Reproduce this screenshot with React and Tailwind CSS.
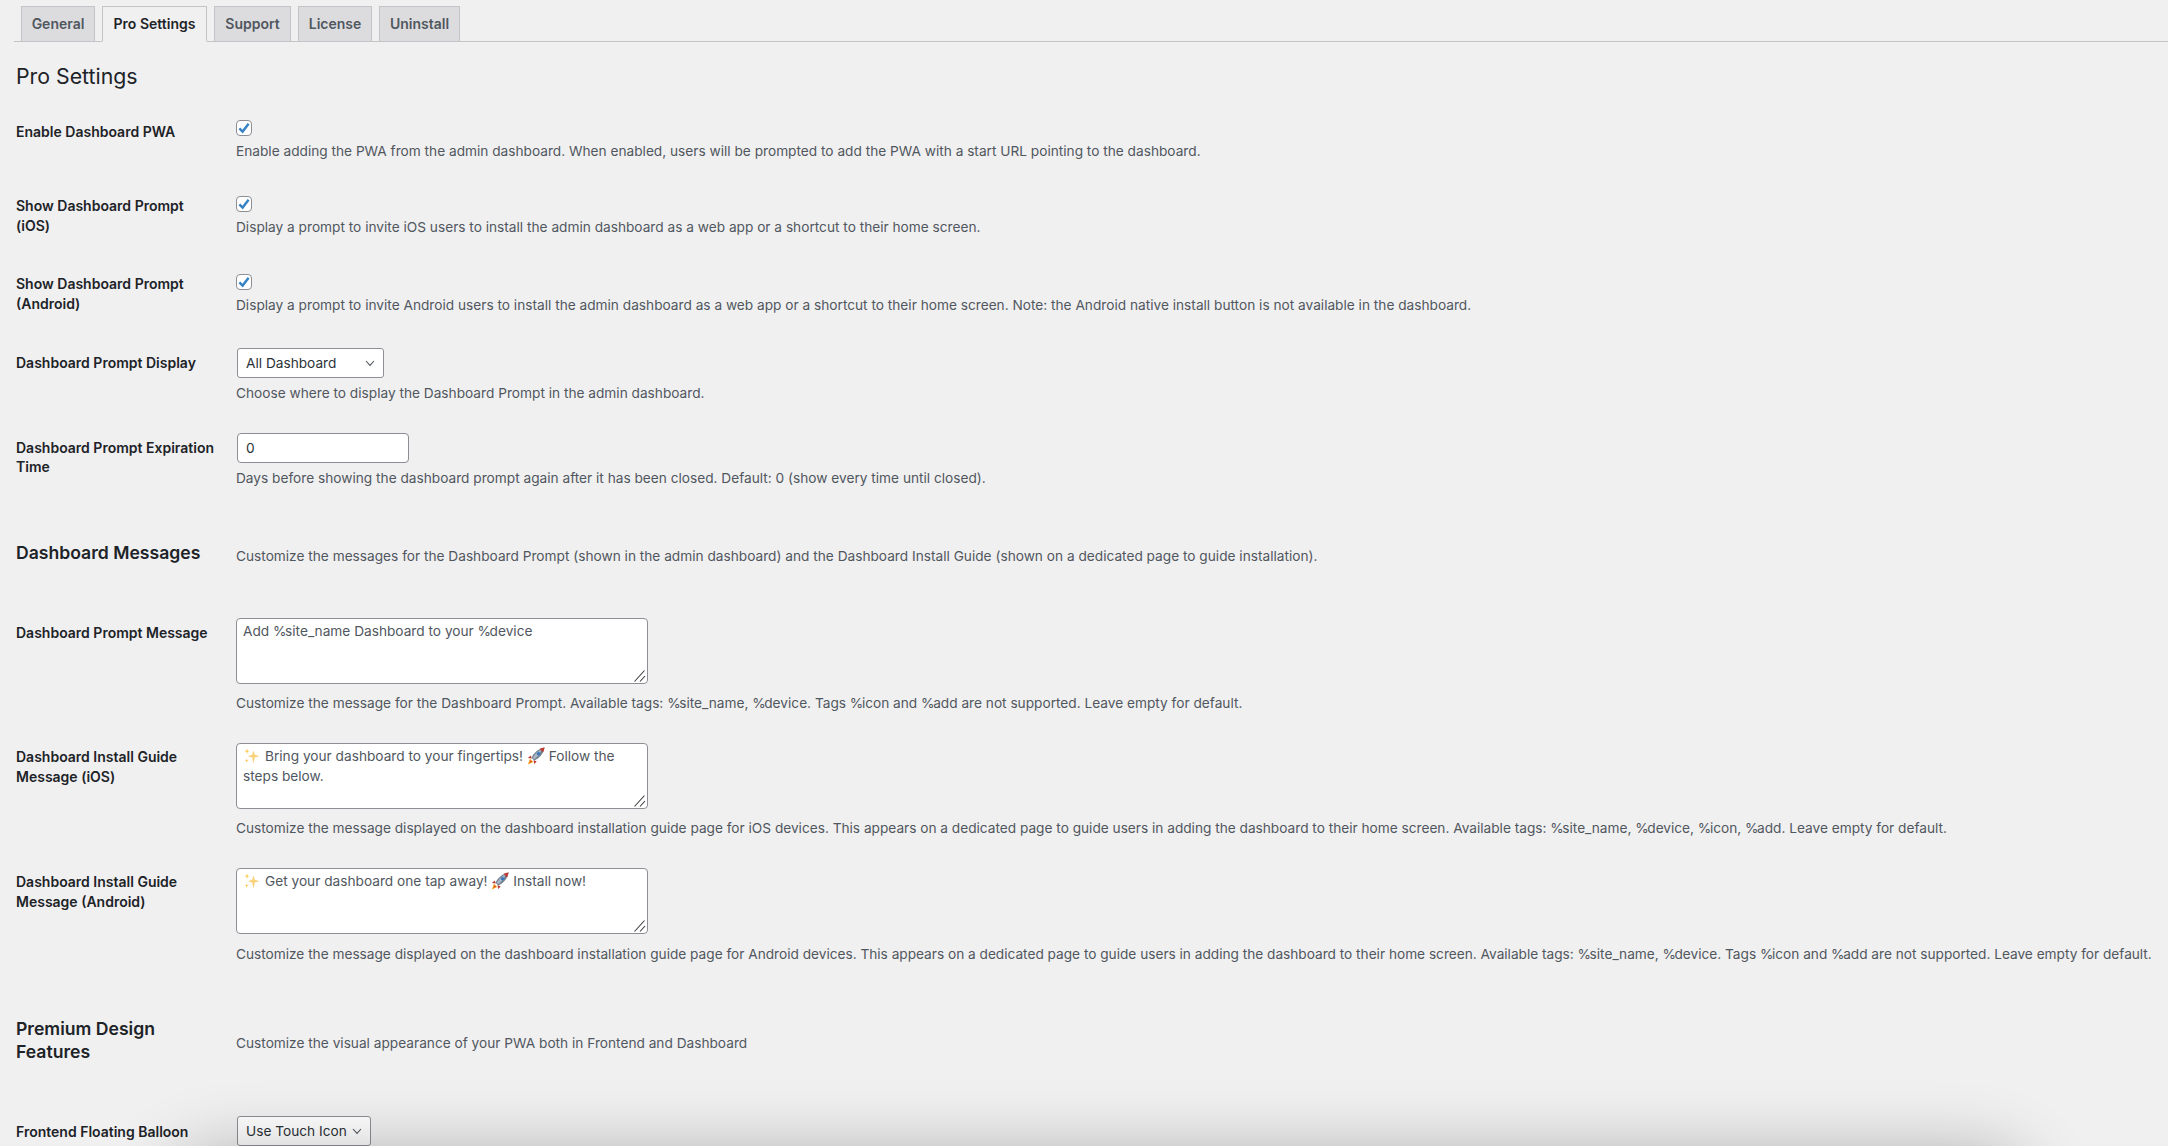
import React from "react";

function Tags({ text }) {
  return text.split("%").map((part, i) =>
    i === 0 ? (
      <React.Fragment key={i}>{part}</React.Fragment>
    ) : (
      <React.Fragment key={i}>
        <span className="tracking-[-1.4px]">%</span>
        {part}
      </React.Fragment>
    )
  );
}

function Sparkle() {
  return (
    <svg viewBox="0 0 16 16" className="inline-block w-[17px] h-[16px] align-[-3px] mr-[5px]">
      <path d="M10 2.5 L11.3 6.8 L15.8 8.2 L11.3 9.6 L10 15.5 L8.6 9.6 L4.2 8.2 L8.6 6.8 Z" fill="#fad27a" />
      <path d="M3.5 0.5 L4.1 2.6 L6 3.2 L4.1 3.8 L3.5 6.2 L2.9 3.8 L1 3.2 L2.9 2.6 Z" fill="#fbc84e" />
      <path d="M3.2 10.5 L3.7 12.1 L5 12.6 L3.7 13.1 L3.2 15 L2.7 13.1 L1.4 12.6 L2.7 12.1 Z" fill="#fbc84e" />
    </svg>
  );
}

function Rocket() {
  return (
    <svg viewBox="0 0 16 16" className="inline-block w-[18px] h-[18px] align-[-4px]">
      <path d="M0.8 15.6 L2.6 10.4 L5.6 13.4 Z" fill="#f4a820" />
      <path d="M2 14.4 L3.2 11.6 L4.6 13 Z" fill="#e5532a" />
      <path d="M3.2 7.6 L0.8 9.8 L4.4 10.2 Z" fill="#c33a32" />
      <path d="M8.6 12.8 L6.4 15.2 L5.8 11.6 Z" fill="#c33a32" />
      <path d="M4 9.6 C6 5 10 1.6 15.6 0.4 C14.6 6 11 10 6.4 12 Z" fill="#6f7f8e" />
      <path d="M5 9.8 C7 6 10 3.4 13 2 C12 5.5 9.5 8.8 6.4 10.8 Z" fill="#a9b7c4" />
      <path d="M11.2 1.6 C12.6 1 14 0.6 15.6 0.4 C15.3 2 14.9 3.4 14.3 4.8 Z" fill="#c33a32" />
      <circle cx="10.2" cy="5.9" r="1.5" fill="#3a78c2" />
    </svg>
  );
}

function Check() {
  return (
    <div className="w-[16px] h-[16px] bg-white border border-[#8c8f94] rounded-[4px] flex items-center justify-center">
      <svg viewBox="0 0 14 14" className="w-[14px] h-[14px]">
        <path d="M2.4 7.4 L5.6 10.6 L11.6 2.8" fill="none" stroke="#3582c4" strokeWidth="2.4" />
      </svg>
    </div>
  );
}

function Chevron() {
  return (
    <svg viewBox="0 0 10 7" className="w-[10px] h-[7px] shrink-0">
      <path d="M1 1 L5 5.4 L9 1" fill="none" stroke="#50575e" strokeWidth="1.1" />
    </svg>
  );
}

function Select({ text, cls }) {
  return (
    <div className={"ml-[1px] h-[30px] bg-white border border-[#8c8f94] rounded-[3px] flex items-center justify-between pl-[8px] pr-[8px] text-[#2c3338] text-[13.68px] " + cls}>
      <span className="whitespace-nowrap">{text}</span>
      <Chevron />
    </div>
  );
}

function Area({ children }) {
  return (
    <div className="relative w-[412px] h-[66px] bg-white border border-[#8c8f94] rounded-[4px] pl-[6px] pr-[6px] pt-[2px] text-[#50575e] text-[13.68px] leading-[20px]">
      {children}
      <svg viewBox="0 0 12 12" className="absolute right-[1px] bottom-[1px] w-[12px] h-[12px]">
        <path d="M0.5 11.5 L10.5 0.5 M6 11.5 L11 6" stroke="#3c3c3c" strokeWidth="1.1" fill="none" />
      </svg>
    </div>
  );
}

function Desc({ children, cls }) {
  return (
    <p className={"text-[#50575e] text-[13.68px] leading-[20px] whitespace-nowrap " + cls}>{children}</p>
  );
}

function Label({ children, cls }) {
  return (
    <div className={"font-semibold text-[#1d2327] text-[14px] whitespace-nowrap " + cls}>{children}</div>
  );
}

function Heading({ children, cls }) {
  return (
    <div className={"font-semibold text-[#1d2327] text-[17.6px] leading-[23px] whitespace-nowrap " + cls}>{children}</div>
  );
}

function Row({ label, field, cls }) {
  return (
    <div className={"grid grid-cols-[220px_1fr] " + cls}>
      <div>{label}</div>
      <div>{field}</div>
    </div>
  );
}

function Tab({ children, active, cls }) {
  return (
    <div
      className={
        "h-[36px] pb-[1px] border border-[#c3c4c7] flex items-center justify-center font-semibold text-[14px] " +
        (active ? "bg-[#f0f0f1] border-b-[#f0f0f1] text-[#1d2327] " : "bg-[#dcdcde] text-[#50575e] ") +
        cls
      }
    >
      <span className="whitespace-nowrap">{children}</span>
    </div>
  );
}

export default function App() {
  return (
    <div className="relative h-[1146px] overflow-hidden bg-[#f0f0f1] font-['Inter','Noto_Sans',sans-serif]">
      <div className="pt-[6px] ml-[14px] pl-[7px] flex gap-[7px] border-b border-[#c3c4c7] h-[42px]">
        <Tab cls="w-[74px]">General</Tab>
        <Tab active cls="w-[105px]">Pro Settings</Tab>
        <Tab cls="w-[77px]">Support</Tab>
        <Tab cls="w-[74px]">License</Tab>
        <Tab cls="w-[81px]">Uninstall</Tab>
      </div>
      <div className="pl-[16px]">
        <h2 className="mt-[20px] h-[44px] text-[21.3px] leading-[28px] text-[#1d2327] font-normal">Pro Settings</h2>

        <Row
          cls="h-[76px] pt-[14px]"
          label={<Label cls="pt-[2px] leading-[19.5px]">Enable Dashboard PWA</Label>}
          field={<>
            <Check />
            <Desc cls="mt-[5px]">Enable adding the PWA from the admin dashboard. When enabled, users will be prompted to add the PWA with a start URL pointing to the dashboard.</Desc>
          </>}
        />
        <Row
          cls="h-[78px] pt-[14px]"
          label={<Label cls="leading-[19.5px]">Show Dashboard Prompt<br />(iOS)</Label>}
          field={<>
            <Check />
            <Desc cls="mt-[5px]">Display a prompt to invite iOS users to install the admin dashboard as a web app or a shortcut to their home screen.</Desc>
          </>}
        />
        <Row
          cls="h-[73px] pt-[14px]"
          label={<Label cls="leading-[19.5px]">Show Dashboard Prompt<br />(Android)</Label>}
          field={<>
            <Check />
            <Desc cls="mt-[5px]">Display a prompt to invite Android users to install the admin dashboard as a web app or a shortcut to their home screen. Note: the Android native install button is not available in the dashboard.</Desc>
          </>}
        />
        <Row
          cls="h-[85px] pt-[15px]"
          label={<Label cls="pt-[5px] leading-[19.5px]">Dashboard Prompt Display</Label>}
          field={<>
            <Select text="All Dashboard" cls="w-[147px]" />
            <Desc cls="mt-[5px]">Choose where to display the Dashboard Prompt in the admin dashboard.</Desc>
          </>}
        />
        <Row
          cls="h-[100px] pt-[15px]"
          label={<Label cls="pt-[5px] leading-[19px]">Dashboard Prompt Expiration<br />Time</Label>}
          field={<>
            <div className="ml-[1px] w-[172px] h-[30px] bg-white border border-[#8c8f94] rounded-[4px] flex items-center pl-[8px] text-[#2c3338] text-[13.68px]">0</div>
            <Desc cls="mt-[5px]">Days before showing the dashboard prompt again after it has been closed. Default: 0 (show every time until closed).</Desc>
          </>}
        />
        <Row
          cls="h-[85px]"
          label={<Heading cls="pt-[23px]">Dashboard Messages</Heading>}
          field={<Desc cls="pt-[28px]">Customize the messages for the Dashboard Prompt (shown in the admin dashboard) and the Dashboard Install Guide (shown on a dedicated page to guide installation).</Desc>}
        />
        <Row
          cls="h-[125px] pt-[15px]"
          label={<Label cls="pt-[5px] leading-[19.5px]">Dashboard Prompt Message</Label>}
          field={<>
            <Area><Tags text="Add %site_name Dashboard to your %device" /></Area>
            <Desc cls="mt-[9px]"><Tags text="Customize the message for the Dashboard Prompt. Available tags: %site_name, %device. Tags %icon and %add are not supported. Leave empty for default." /></Desc>
          </>}
        />
        <Row
          cls="h-[125px] pt-[15px]"
          label={<Label cls="pt-[4px] leading-[20px]">Dashboard Install Guide<br />Message (iOS)</Label>}
          field={<>
            <Area><Sparkle />Bring your dashboard to your fingertips! <Rocket /> Follow the steps below.</Area>
            <Desc cls="mt-[9px] tracking-[-0.008px]"><Tags text="Customize the message displayed on the dashboard installation guide page for iOS devices. This appears on a dedicated page to guide users in adding the dashboard to their home screen. Available tags: %site_name, %device, %icon, %add. Leave empty for default." /></Desc>
          </>}
        />
        <Row
          cls="h-[137px] pt-[15px]"
          label={<Label cls="pt-[4px] leading-[20px]">Dashboard Install Guide<br />Message (Android)</Label>}
          field={<>
            <Area><Sparkle />Get your dashboard one tap away! <Rocket /> Install now!</Area>
            <Desc cls="mt-[10px] tracking-[-0.012px]"><Tags text="Customize the message displayed on the dashboard installation guide page for Android devices. This appears on a dedicated page to guide users in adding the dashboard to their home screen. Available tags: %site_name, %device. Tags %icon and %add are not supported. Leave empty for default." /></Desc>
          </>}
        />
        <Row
          cls="h-[111px]"
          label={<Heading cls="pt-[27px]">Premium Design<br />Features</Heading>}
          field={<Desc cls="pt-[43px]">Customize the visual appearance of your PWA both in Frontend and Dashboard</Desc>}
        />
        <Row
          cls="pt-[15px]"
          label={<Label cls="pt-[6px] leading-[19.5px]">Frontend Floating Balloon</Label>}
          field={<Select text="Use Touch Icon" cls="w-[134px]" />}
        />
      </div>
      <div className="absolute left-[200px] right-[170px] top-[1185px] h-[40px] rounded-[40px] shadow-[0_0_70px_30px_rgba(0,0,0,0.3)] pointer-events-none" />
    </div>
  );
}
